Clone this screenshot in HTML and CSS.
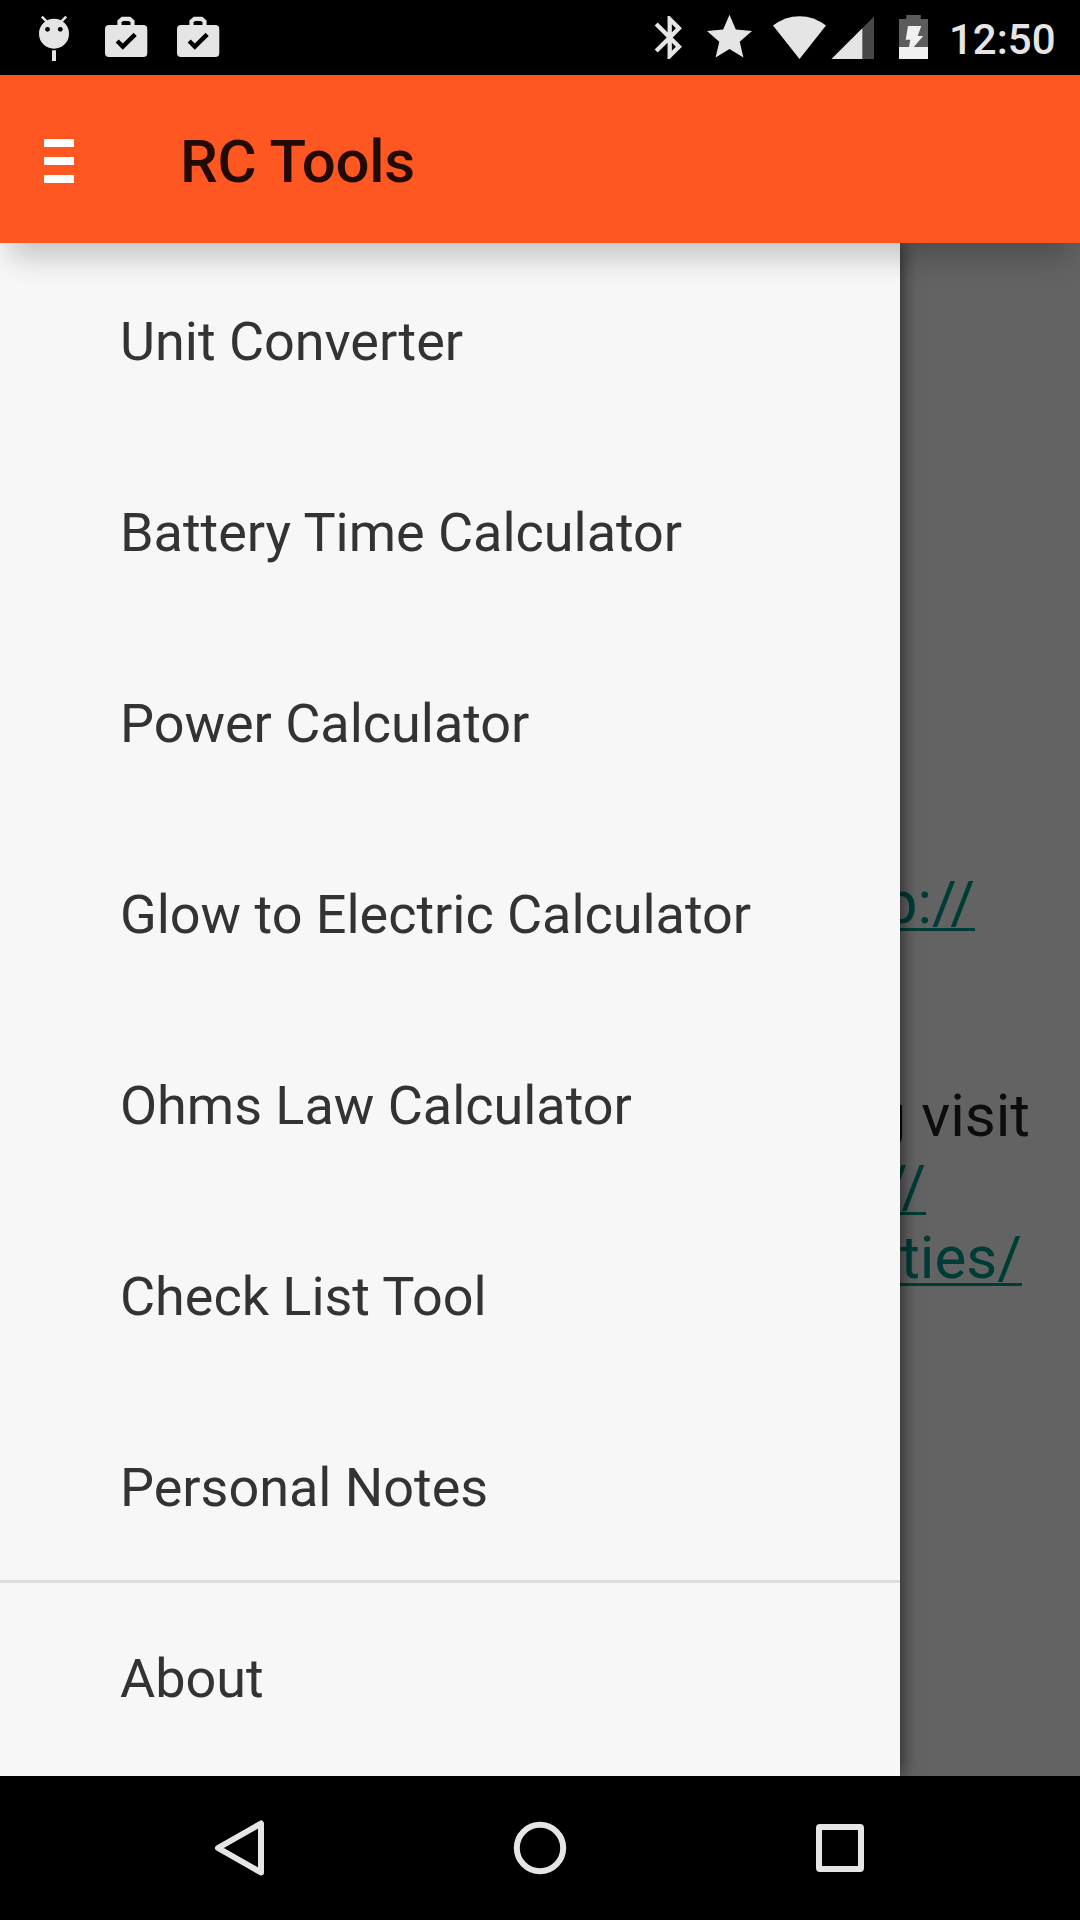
FILE: index.html
```html
<!DOCTYPE html>
<html lang="en">

<head>
    <meta charset="utf-8">
    <title>RC Tools</title>
    <link rel="stylesheet" href="styles.css">
</head>

<body>
    <div class="status-bar">
        <div class="notifications">
            <svg width="72" height="75" viewBox="18 0 72 75">
                <path d="M41.8 16.6l6 6M66.2 16.6l-6 6" stroke="#e5e5e5" stroke-width="2.6" />
                <circle cx="54" cy="33.7" r="15" />
                <circle cx="47.5" cy="29.3" r="2.4" fill="#000" />
                <circle cx="60.3" cy="29.3" r="2.4" fill="#000" />
                <path d="M52 50.3h4V61h-4z" />
            </svg>
            <svg width="72" height="75" viewBox="90 0 72 75">
                <path d="M119.5 26v-4.5l3-2.7h7l3 2.7v4.5" fill="none" stroke="#e5e5e5" stroke-width="4.2" />
                <rect x="105" y="25" width="42.3" height="32" rx="4" />
                <path d="M117.2 41l5.6 5.6 12.4-12.2" fill="none" stroke="#000" stroke-width="4.4" />
            </svg>
            <svg width="72" height="75" viewBox="90 0 72 75">
                <path d="M119.5 26v-4.5l3-2.7h7l3 2.7v4.5" fill="none" stroke="#e5e5e5" stroke-width="4.2" />
                <rect x="105" y="25" width="42.3" height="32" rx="4" />
                <path d="M117.2 41l5.6 5.6 12.4-12.2" fill="none" stroke="#000" stroke-width="4.4" />
            </svg>
        </div>
        <div class="system-icons">
            <svg width="60" height="75" viewBox="635 0 60 75">
                <path transform="translate(643.9 11.7) scale(2.15)" d="M17.71 7.71L12 2h-1v7.59L6.41 5 5 6.41 10.59 12 5 17.59 6.41 19 11 14.41V22h1l5.71-5.71-4.3-4.29 4.3-4.29zM13 5.83l1.88 1.88L13 9.59V5.83zm1.88 10.46L13 18.17v-3.76l1.88 1.88z" />
            </svg>
            <svg width="70" height="75" viewBox="695 0 70 75">
                <path transform="translate(702.5 10.2) scale(2.25)" d="M12 17.27L18.18 21l-1.64-7.03L22 9.24l-7.19-.61L12 2 9.19 8.63 2 9.24l5.46 4.73L5.82 21z" />
            </svg>
            <svg width="64" height="75" viewBox="765 0 64 75">
                <path d="M799.5 59L773 25.6Q785 16.2 799.5 16.2T826 25.6z" />
            </svg>
            <svg width="56" height="75" viewBox="829 0 56 75">
                <path d="M831.5 59H874V16.5z" fill="#474747" />
                <path d="M831.5 59H862.3V28.2z" />
            </svg>
            <svg width="55" height="75" viewBox="885 0 55 75">
                <path d="M906.3 15h14.4v4h7.3v40h-29V19h7.3z" fill="#5c5c5c" />
                <path d="M899 47h29v12h-29z" fill="#f0f0f0" />
                <path d="M908 26h13.3l-3.6 10h5.6L907.7 54l2.6-14.3h-4.6z" fill="#f0f0f0" />
            </svg>
            <span class="clock">12:50</span>
        </div>
    </div>

    <header class="toolbar">
        <div class="menu-icon">
            <span></span>
            <span></span>
            <span></span>
        </div>
        <h1>RC Tools</h1>
    </header>

    <main class="content">
        <div class="page-text">
            <p class="line line-site"><a>http://</a></p>
            <p class="line line-visit">blog visit</p>
            <p class="line line-link"><a>http://</a></p>
            <p class="line line-path"><a>activities/</a></p>
        </div>
        <div class="scrim"></div>
        <nav class="drawer">
            <ul>
                <li>Unit Converter</li>
                <li>Battery Time Calculator</li>
                <li>Power Calculator</li>
                <li>Glow to Electric Calculator</li>
                <li>Ohms Law Calculator</li>
                <li>Check List Tool</li>
                <li>Personal Notes</li>
                <li class="separated">About</li>
            </ul>
        </nav>
    </main>

    <footer class="nav-bar">
        <svg width="60" height="72" viewBox="210 1812 60 72">
            <path d="M261 1823.5v49L218 1848z" />
        </svg>
        <svg width="60" height="72" viewBox="510 1812 60 72">
            <circle cx="540" cy="1848" r="23.2" />
        </svg>
        <svg width="60" height="72" viewBox="810 1812 60 72">
            <rect x="819" y="1827" width="42" height="42" rx="1" />
        </svg>
    </footer>
</body>

</html>
```
FILE: styles.css
```css
body {
    font-family: Roboto, sans-serif;
    width: 1080px;
    height: 1920px;
    margin: 0;
    padding: 0;
    display: flex;
    flex-direction: column;
    overflow: hidden;
    background-color: #000;
}

svg {
    display: block;
}

.status-bar {
    height: 75px;
    display: flex;
    justify-content: space-between;
    position: relative;
    z-index: 3;
    background-color: #000;
    fill: #e5e5e5;
}

.notifications {
    display: flex;
    padding-left: 18px;
}

.system-icons {
    display: flex;
    padding-right: 24px;
}

.clock {
    width: 107px;
    margin-left: 9px;
    color: #e5e5e5;
    font-size: 42px;
    font-weight: 500;
    line-height: 79px;
    white-space: nowrap;
}

.toolbar {
    height: 168px;
    display: flex;
    align-items: center;
    position: relative;
    z-index: 2;
    background-color: #ff5722;
    box-shadow: 0 24px 28px -10px rgba(0, 0, 0, 0.21);
}

.menu-icon {
    width: 30px;
    margin-left: 44px;
    margin-top: 4px;
    display: flex;
    flex-direction: column;
    gap: 10px;
}

.menu-icon span {
    height: 8px;
    background-color: #fff;
}

.toolbar h1 {
    margin: 5px 0 0 106px;
    color: #210b04;
    font-size: 60px;
    font-weight: 500;
    letter-spacing: -0.3px;
    line-height: 70px;
}

.content {
    height: 1533px;
    position: relative;
    overflow: hidden;
    background-color: #f7f7f7;
}

.page-text {
    padding-top: 624px;
    text-align: right;
    font-size: 60px;
    line-height: 71px;
    color: #202020;
}

.line {
    margin: 0;
}

.line a {
    color: #009688;
    text-decoration: underline;
    text-decoration-thickness: 3px;
    text-underline-offset: 5px;
    text-decoration-skip-ink: none;
}

.line-site {
    margin: 0 105px 142px 0;
}

.line-visit {
    margin-right: 50px;
}

.line-link {
    margin-right: 154px;
}

.line-path {
    margin-right: 58px;
}

/* dimmed page behind the open drawer */
.scrim {
    position: absolute;
    inset: 0;
    background-color: rgba(0, 0, 0, 0.6);
}

.drawer {
    position: absolute;
    top: 0;
    bottom: 0;
    left: 0;
    width: 900px;
    background-color: #f7f7f7;
    box-shadow: 0 0 18px rgba(0, 0, 0, 0.75);
}

.drawer ul {
    list-style: none;
    margin: 0;
    padding: 0;
}

.drawer li {
    box-sizing: border-box;
    height: 191px;
    padding-left: 120px;
    border-top: 3px solid transparent;
    color: #333;
    font-size: 54px;
    letter-spacing: -0.03px;
    line-height: 192px;
}

.drawer .separated {
    border-top-color: #ddd;
}

.nav-bar {
    height: 144px;
    display: flex;
    justify-content: center;
    align-items: center;
    gap: 240px;
    background-color: #000;
    fill: none;
    stroke: #e5e5e5;
    stroke-width: 6px;
    stroke-linejoin: round;
}
```
